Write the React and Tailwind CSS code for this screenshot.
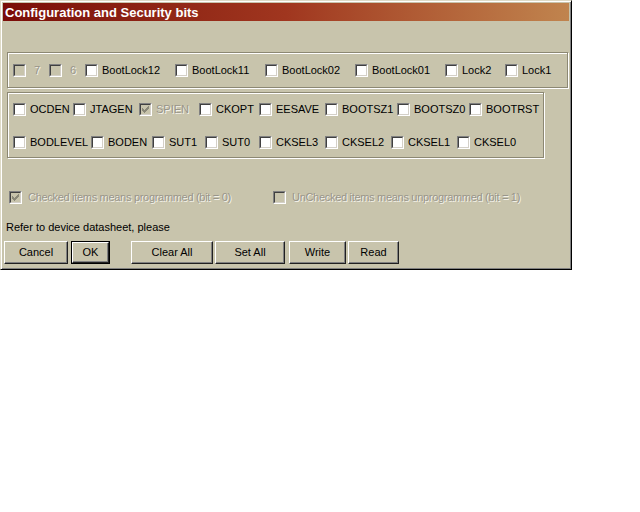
import React from 'react';

const face = 'bg-[#c8c4ac]';

function Check({ checked, disabled }) {
    return (
        <div className="w-[13px] h-[13px] shrink-0 border border-t-[#808080] border-l-[#808080] border-r-white border-b-white">
            <div
                className={`w-full h-full border border-t-[#404040] border-l-[#404040] border-r-[#d4d0c8] border-b-[#d4d0c8] flex items-center justify-center ${
                    disabled ? face : 'bg-white'
                }`}
            >
                {checked && (
                    <svg width="7" height="7" viewBox="0 0 7 7" shapeRendering="crispEdges">
                        <path d="M6 0h1v3h-1v1h-1v1h-1v1h-1v1h-1v-1h-1v-1h-1v-3h1v1h1v1h1v-1h1v-1h1z" fill="#8a8878" />
                    </svg>
                )}
            </div>
        </div>
    );
}

function Item({ label, w, disabled, checked, gap = 'gap-[4px]', tight }) {
    return (
        <div className={`flex items-center ${gap} ${w} shrink-0`}>
            <Check disabled={disabled} checked={checked} />
            <span
                className={`text-[11px] leading-none whitespace-nowrap ${tight ? 'tracking-[-0.3px]' : ''} ${
                    disabled ? 'text-[#98958a] [text-shadow:1px_1px_0_#f4f2ea]' : 'text-black'
                }`}
            >
                {label}
            </span>
        </div>
    );
}

function Button({ children, w, isDefault }) {
    const inner = (
        <div
            className={`h-full ${w} flex items-center justify-center text-[11px] text-black border border-t-white border-l-white border-r-[#202020] border-b-[#202020] shadow-[inset_-1px_-1px_0_#808080] ${face}`}
        >
            {children}
        </div>
    );
    if (isDefault) {
        return <div className="h-[23px] border border-black">{inner}</div>;
    }
    return <div className="h-[23px]">{inner}</div>;
}

export default function App() {
    return (
        <div className="w-[640px] h-[512px] bg-white" style={{ fontFamily: '"Liberation Sans", Arial, sans-serif' }}>
            <div
                className={`w-[572px] h-[270px] ${face} border border-t-[#dedac6] border-l-[#dedac6] border-r-black border-b-black shadow-[inset_1px_1px_0_#fff,inset_-1px_-1px_0_#808080] p-[2px] flex flex-col`}
            >
                <div className="h-[18px] bg-gradient-to-r from-[#7a0c08] via-[#a0361f] to-[#c0844e] flex items-center px-[2px]">
                    <span className="text-white font-bold text-[13px] leading-none">Configuration and Security bits</span>
                </div>

                <div className="mt-[31px] ml-[4px] w-[561px] h-[36px] border border-[#8c8873] shadow-[inset_1px_1px_0_#fff,1px_1px_0_#fff] flex items-center pl-[5px]">
                    <Item label="7" w="w-[36px]" disabled gap="gap-[8px]" />
                    <Item label="6" w="w-[36px]" disabled gap="gap-[8px]" />
                    <Item label="BootLock12" w="w-[90px]" />
                    <Item label="BootLock11" w="w-[90px]" />
                    <Item label="BootLock02" w="w-[90px]" />
                    <Item label="BootLock01" w="w-[90px]" />
                    <Item label="Lock2" w="w-[60px]" />
                    <Item label="Lock1" w="w-[50px]" />
                </div>

                <div className="mt-[4px] ml-[4px] w-[537px] h-[66px] border border-[#8c8873] shadow-[inset_1px_1px_0_#fff,1px_1px_0_#fff] flex flex-col pl-[5px] pt-[10px] gap-[20px]">
                    <div className="flex items-center h-[13px]">
                        <Item label="OCDEN" w="w-[60px]" />
                        <Item label="JTAGEN" w="w-[66px]" />
                        <Item label="SPIEN" w="w-[60px]" disabled checked />
                        <Item label="CKOPT" w="w-[60px]" />
                        <Item label="EESAVE" w="w-[66px]" />
                        <Item label="BOOTSZ1" w="w-[72px]" />
                        <Item label="BOOTSZ0" w="w-[72px]" />
                        <Item label="BOOTRST" w="w-[60px]" />
                    </div>
                    <div className="flex items-center h-[13px]">
                        <Item label="BODLEVEL" w="w-[78px]" />
                        <Item label="BODEN" w="w-[61px]" />
                        <Item label="SUT1" w="w-[53px]" />
                        <Item label="SUT0" w="w-[54px]" />
                        <Item label="CKSEL3" w="w-[66px]" />
                        <Item label="CKSEL2" w="w-[66px]" />
                        <Item label="CKSEL1" w="w-[66px]" />
                        <Item label="CKSEL0" w="w-[60px]" />
                    </div>
                </div>

                <div className="mt-[33px] ml-[6px] flex items-center h-[13px]">
                    <Item label="Checked items means programmed (bit = 0)" w="w-[264px]" disabled checked gap="gap-[6px]" tight />
                    <Item label="UnChecked items means unprogrammed (bit = 1)" w="w-[260px]" disabled gap="gap-[6px]" tight />
                </div>

                <div className="mt-[18px] ml-[3px] text-[11px] leading-none text-black">Refer to device datasheet, please</div>

                <div className="mt-[8px] ml-[1px] flex items-center">
                    <Button w="w-[64px]">Cancel</Button>
                    <div className="ml-[3px]">
                        <Button w="w-[37px]" isDefault>
                            OK
                        </Button>
                    </div>
                    <div className="ml-[21px] flex gap-[2px]">
                        <Button w="w-[82px]">Clear All</Button>
                        <Button w="w-[70px]">Set All</Button>
                        <div className="ml-[2px] flex gap-[2px]">
                            <Button w="w-[57px]">Write</Button>
                            <Button w="w-[51px]">Read</Button>
                        </div>
                    </div>
                </div>
            </div>
        </div>
    );
}
